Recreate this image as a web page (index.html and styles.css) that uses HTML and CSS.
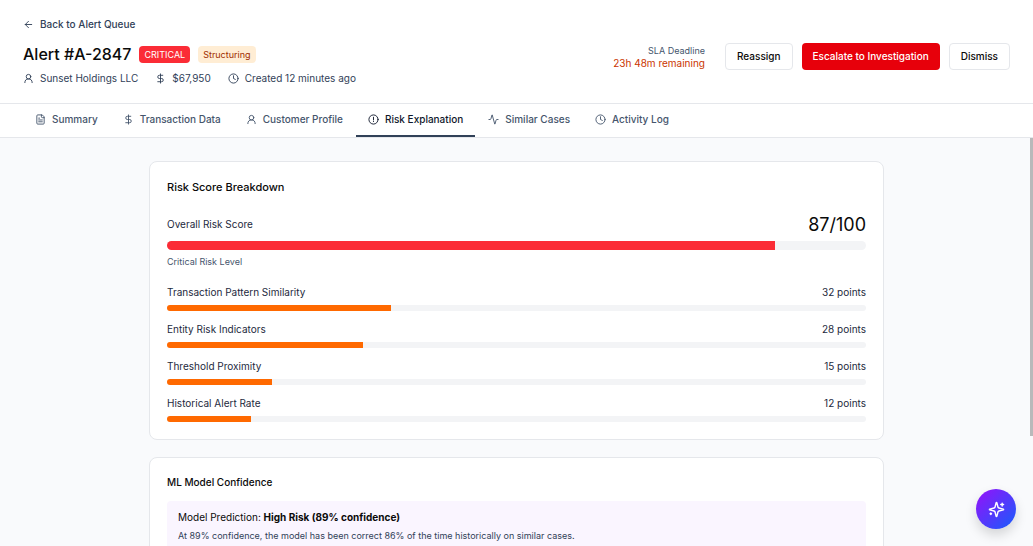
FILE: index.html
```html
<!DOCTYPE html>
<html lang="en">
<head>
    <meta charset="UTF-8">
    <meta name="viewport" content="width=device-width, initial-scale=1.0">
    <title>Alert #A-2847</title>
    <link rel="stylesheet" href="styles.css">
</head>
<body>
    <header class="header">
        <a href="#" class="back">
            <svg class="icon" viewBox="0 0 24 24"><path d="m12 19-7-7 7-7M19 12H5"/></svg>
            Back to Alert Queue
        </a>
        <div class="header-row">
            <div class="alert-info">
                <div class="title-row">
                    <h1>Alert #A-2847</h1>
                    <span class="badge badge-critical">CRITICAL</span>
                    <span class="badge badge-type">Structuring</span>
                </div>
                <div class="meta">
                    <span class="meta-item">
                        <svg class="icon" viewBox="0 0 24 24"><circle cx="12" cy="8" r="5"/><path d="M20 21a8 8 0 0 0-16 0"/></svg>
                        Sunset Holdings LLC
                    </span>
                    <span class="meta-item">
                        <svg class="icon" viewBox="0 0 24 24"><path d="M12 2v20M17 5H9.5a3.5 3.5 0 0 0 0 7h5a3.5 3.5 0 0 1 0 7H6"/></svg>
                        $67,950
                    </span>
                    <span class="meta-item">
                        <svg class="icon" viewBox="0 0 24 24"><circle cx="12" cy="12" r="10"/><path d="M12 6v6l4 2"/></svg>
                        Created 12 minutes ago
                    </span>
                </div>
            </div>
            <div class="actions">
                <div class="sla">
                    <div class="sla-label">SLA Deadline</div>
                    <div class="sla-time">23h 48m remaining</div>
                </div>
                <button type="button" class="btn">Reassign</button>
                <button type="button" class="btn btn-danger">Escalate to Investigation</button>
                <button type="button" class="btn">Dismiss</button>
            </div>
        </div>
    </header>

    <nav class="tabs">
        <button type="button" class="tab">
            <svg class="icon" viewBox="0 0 24 24"><path d="M15 2H6a2 2 0 0 0-2 2v16a2 2 0 0 0 2 2h12a2 2 0 0 0 2-2V7Z"/><path d="M14 2v4a2 2 0 0 0 2 2h4M10 9H8M16 13H8M16 17H8"/></svg>
            Summary
        </button>
        <button type="button" class="tab">
            <svg class="icon" viewBox="0 0 24 24"><path d="M12 2v20M17 5H9.5a3.5 3.5 0 0 0 0 7h5a3.5 3.5 0 0 1 0 7H6"/></svg>
            Transaction Data
        </button>
        <button type="button" class="tab">
            <svg class="icon" viewBox="0 0 24 24"><circle cx="12" cy="8" r="5"/><path d="M20 21a8 8 0 0 0-16 0"/></svg>
            Customer Profile
        </button>
        <button type="button" class="tab active">
            <svg class="icon" viewBox="0 0 24 24"><circle cx="12" cy="12" r="10"/><path d="M12 7v6M12 16v.5"/></svg>
            Risk Explanation
        </button>
        <button type="button" class="tab">
            <svg class="icon" viewBox="0 0 24 24"><path d="M22 12h-2.5a2 2 0 0 0-1.9 1.5l-2.4 8.3a.25.25 0 0 1-.5 0L9.2 2.2a.25.25 0 0 0-.5 0l-2.3 8.3A2 2 0 0 1 4.5 12H2"/></svg>
            Similar Cases
        </button>
        <button type="button" class="tab">
            <svg class="icon" viewBox="0 0 24 24"><circle cx="12" cy="12" r="10"/><path d="M12 6v6l4 2"/></svg>
            Activity Log
        </button>
    </nav>

    <div class="content">
        <main class="panels">
            <section class="card">
                <h2>Risk Score Breakdown</h2>
                <div class="overall">
                    <div class="score-row">
                        <span>Overall Risk Score</span>
                        <span class="score">87/100</span>
                    </div>
                    <div class="bar bar-large"><div class="fill fill-red" style="width: 87%"></div></div>
                    <p class="level">Critical Risk Level</p>
                </div>
                <div class="factors">
                    <div class="factor">
                        <div class="score-row"><span>Transaction Pattern Similarity</span><span>32 points</span></div>
                        <div class="bar"><div class="fill" style="width: 32%"></div></div>
                    </div>
                    <div class="factor">
                        <div class="score-row"><span>Entity Risk Indicators</span><span>28 points</span></div>
                        <div class="bar"><div class="fill" style="width: 28%"></div></div>
                    </div>
                    <div class="factor">
                        <div class="score-row"><span>Threshold Proximity</span><span>15 points</span></div>
                        <div class="bar"><div class="fill" style="width: 15%"></div></div>
                    </div>
                    <div class="factor">
                        <div class="score-row"><span>Historical Alert Rate</span><span>12 points</span></div>
                        <div class="bar"><div class="fill" style="width: 12%"></div></div>
                    </div>
                </div>
            </section>

            <section class="card">
                <h3>ML Model Confidence</h3>
                <div class="prediction">
                    <p>Model Prediction: <strong>High Risk (89% confidence)</strong></p>
                    <p class="note">At 89% confidence, the model has been correct 86% of the time historically on similar cases.</p>
                </div>
            </section>
        </main>
        <div class="scroll-thumb"></div>
    </div>

    <button type="button" class="assistant" aria-label="Open assistant">
        <svg class="icon" viewBox="0 0 24 24"><path d="M9.94 15.5A2 2 0 0 0 8.5 14.06l-6.14-1.58a.5.5 0 0 1 0-.96L8.5 9.94A2 2 0 0 0 9.94 8.5l1.58-6.14a.5.5 0 0 1 .96 0l1.58 6.14a2 2 0 0 0 1.44 1.44l6.14 1.58a.5.5 0 0 1 0 .96l-6.14 1.58a2 2 0 0 0-1.44 1.44l-1.58 6.14a.5.5 0 0 1-.96 0zM20 3v4M22 5h-4M4 17v2M5 18H3"/></svg>
    </button>
</body>
</html>
```
FILE: styles.css
```css
* {
    box-sizing: border-box;
}
body {
    display: flex;
    flex-direction: column;
    height: 100vh;
    margin: 0;
    overflow: hidden;
    font-family: Inter, "Liberation Sans", sans-serif;
    font-size: 10px;
    line-height: 15px;
    color: #0a0a0a;
    background-color: #fff;
}
h1, h2, h3, p {
    margin: 0;
}
button {
    font-family: inherit;
    font-size: 10px;
    line-height: 15px;
    cursor: pointer;
}
.icon {
    flex: none;
    width: 11px;
    height: 11px;
    fill: none;
    stroke: currentColor;
    stroke-width: 2;
    stroke-linecap: round;
    stroke-linejoin: round;
}

/* header */
.header {
    padding: 17px 23px;
    border-bottom: 1px solid #e5e7eb;
}
.back {
    display: inline-flex;
    align-items: center;
    gap: 6px;
    color: #314158;
    font-weight: 500;
    text-decoration: none;
}
.header-row {
    display: flex;
    justify-content: space-between;
    align-items: flex-start;
    margin-top: 7px;
}
.title-row {
    display: flex;
    align-items: center;
    gap: 8px;
}
h1 {
    font-size: 16px;
    line-height: 26px;
    font-weight: 500;
}
.badge {
    padding: 1px 5px;
    border-radius: 4px;
    font-size: 9px;
}
.badge-critical {
    color: #fff;
    background-color: #fb2c36;
}
.badge-type {
    color: #9f2d00;
    background-color: #ffedd4;
}
.meta {
    display: flex;
    gap: 17px;
    margin-top: 4px;
    color: #314158;
}
.meta-item {
    display: flex;
    align-items: center;
    gap: 6px;
}
.actions {
    display: flex;
    align-items: center;
    gap: 9px;
    padding-top: 2px;
}
.sla {
    margin-right: 11px;
    text-align: right;
    line-height: 13px;
}
.sla-label {
    font-size: 9px;
    color: #45556c;
}
.sla-time {
    color: #ca3500;
}
.btn {
    padding: 5px 11px;
    border: 1px solid #e5e7eb;
    border-radius: 4px;
    color: #0a0a0a;
    background-color: #fff;
    font-weight: 500;
}
.btn-danger {
    padding: 6px 11px;
    border: none;
    color: #fff;
    background-color: #e7000b;
}

/* tabs */
.tabs {
    display: flex;
    gap: 1px;
    padding: 0 23px;
    border-bottom: 1px solid #e5e7eb;
}
.tab {
    display: flex;
    align-items: center;
    gap: 6px;
    padding: 8px 12px;
    border: none;
    border-bottom: 2px solid transparent;
    color: #45556c;
    background: none;
    font-weight: 500;
}
.tab.active {
    border-color: #314158;
    color: #0f172b;
}

/* content */
.content {
    position: relative;
    flex: 1;
    min-height: 0;
    padding: 23px;
    overflow: hidden;
    background-color: #f9fafc;
}
.panels {
    display: flex;
    flex-direction: column;
    gap: 17px;
    max-width: 735px;
    margin: 0 auto;
}
.card {
    padding: 17px;
    border: 1px solid #e5e7eb;
    border-radius: 8px;
    background-color: #fff;
}
h2 {
    font-size: 11px;
    line-height: 17px;
    font-weight: 500;
}
h3 {
    font-size: 10px;
    line-height: 15px;
    font-weight: 500;
}
.overall {
    margin-top: 17px;
}
.score-row {
    display: flex;
    justify-content: space-between;
    align-items: center;
    color: #1d293d;
}
.score {
    font-size: 18px;
    line-height: 23px;
    color: #0a0a0a;
}
.bar {
    height: 6px;
    margin-top: 5px;
    border-radius: 6px;
    overflow: hidden;
    background-color: #f3f4f6;
}
.bar-large {
    height: 9px;
}
.fill {
    height: 100%;
    background-color: #ff6900;
}
.fill-red {
    background-color: #fb2c36;
}
.level {
    margin-top: 4px;
    font-size: 9px;
    color: #45556c;
}
.factors {
    display: flex;
    flex-direction: column;
    gap: 11px;
    margin-top: 16px;
}
.prediction {
    min-height: 140px;
    margin-top: 11px;
    padding: 9px 11px;
    border-radius: 4px;
    background-color: #faf5ff;
}
.note {
    margin-top: 3px;
    font-size: 9px;
    color: #314158;
}
.scroll-thumb {
    position: absolute;
    top: 0;
    right: 0;
    width: 3px;
    height: 73%;
    background-color: #b8b9ba;
}

/* floating button */
.assistant {
    position: fixed;
    right: 17px;
    bottom: 17px;
    display: flex;
    align-items: center;
    justify-content: center;
    width: 40px;
    height: 40px;
    padding: 0;
    border: none;
    border-radius: 50%;
    color: #fff;
    background: linear-gradient(135deg, #9810fa, #155dfc);
    box-shadow: 0 6px 12px rgba(0, 0, 0, 0.15);
}
.assistant .icon {
    width: 17px;
    height: 17px;
}
```
